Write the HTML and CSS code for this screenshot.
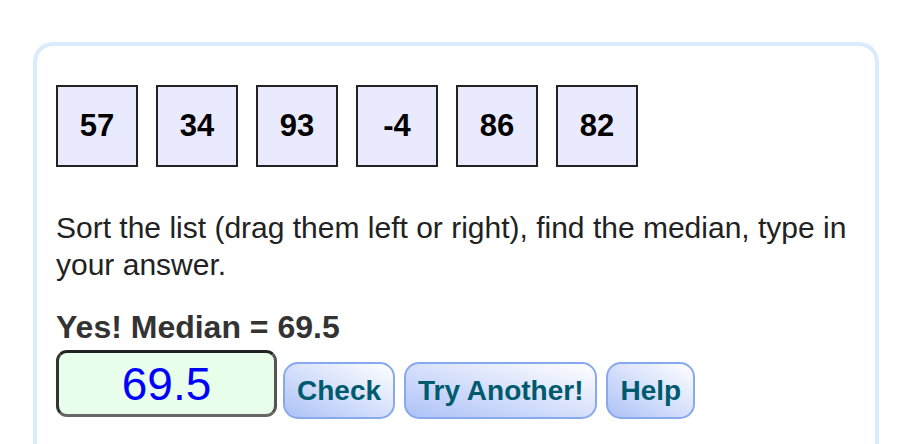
FILE: index.html
```html
<!DOCTYPE html>
<html>
<head>
<meta charset="utf-8">
<link rel="stylesheet" href="styles.css">
</head>
<body>
<div class="card">
  <div class="tiles">
    <div class="tile">57</div>
    <div class="tile">34</div>
    <div class="tile">93</div>
    <div class="tile">-4</div>
    <div class="tile">86</div>
    <div class="tile">82</div>
  </div>
  <p class="instr">Sort the list (drag them left or right), find the median, type in your answer.</p>
  <div class="result">Yes! Median = 69.5</div>
  <div class="controls">
    <input class="answer" type="text" value="69.5">
    <button class="btn">Check</button>
    <button class="btn">Try Another!</button>
    <button class="btn">Help</button>
  </div>
</div>
</body>
</html>
```
FILE: styles.css
```css
html, body {
  margin: 0;
  padding: 0;
  background: #fff;
}
body {
  padding: 42px 28px 0 33px;
  font-family: "Liberation Sans", Arial, sans-serif;
}
.card {
  width: 846px;
  height: 420px;
  border: 4px solid #d9ebfd;
  border-bottom: none;
  border-radius: 20px 20px 0 0;
  box-sizing: border-box;
  padding: 39px 0 0 19px;
}
.tiles {
  display: flex;
  gap: 18px;
}
.tile {
  width: 78px;
  height: 78px;
  border: 2px solid #222;
  background: #eaeafe;
  display: flex;
  align-items: center;
  justify-content: center;
  font-weight: bold;
  font-size: 31px;
  color: #000;
}
.instr {
  margin: 42px 0 0;
  font-size: 30px;
  line-height: 37px;
  color: #222;
  width: 800px;
}
.result {
  margin-top: 26px;
  font-size: 32px;
  font-weight: bold;
  color: #333;
  line-height: 36px;
}
.controls {
  display: flex;
  align-items: flex-end;
  gap: 9px;
  margin-top: 5px;
}
.answer {
  width: 221px;
  height: 67px;
  box-sizing: border-box;
  border: 3px solid #222;
  border-bottom-color: #666;
  border-right-color: #555;
  border-left-color: #333;
  border-radius: 11px;
  background: #e9fdeb;
  color: #0000ff;
  font-family: "Liberation Sans", Arial, sans-serif;
  font-size: 46px;
  text-align: center;
  padding: 0;
  margin: 0 -3px 2px 0;
}
.btn {
  height: 57px;
  box-sizing: border-box;
  border: 2px solid #88a9ee;
  border-radius: 15px;
  background: linear-gradient(to top right, #aec2f8, #ffffff);
  color: #005a6e;
  font-family: "Liberation Sans", Arial, sans-serif;
  font-weight: bold;
  font-size: 28px;
  padding: 0 12px;
  margin: 0;
}
```
